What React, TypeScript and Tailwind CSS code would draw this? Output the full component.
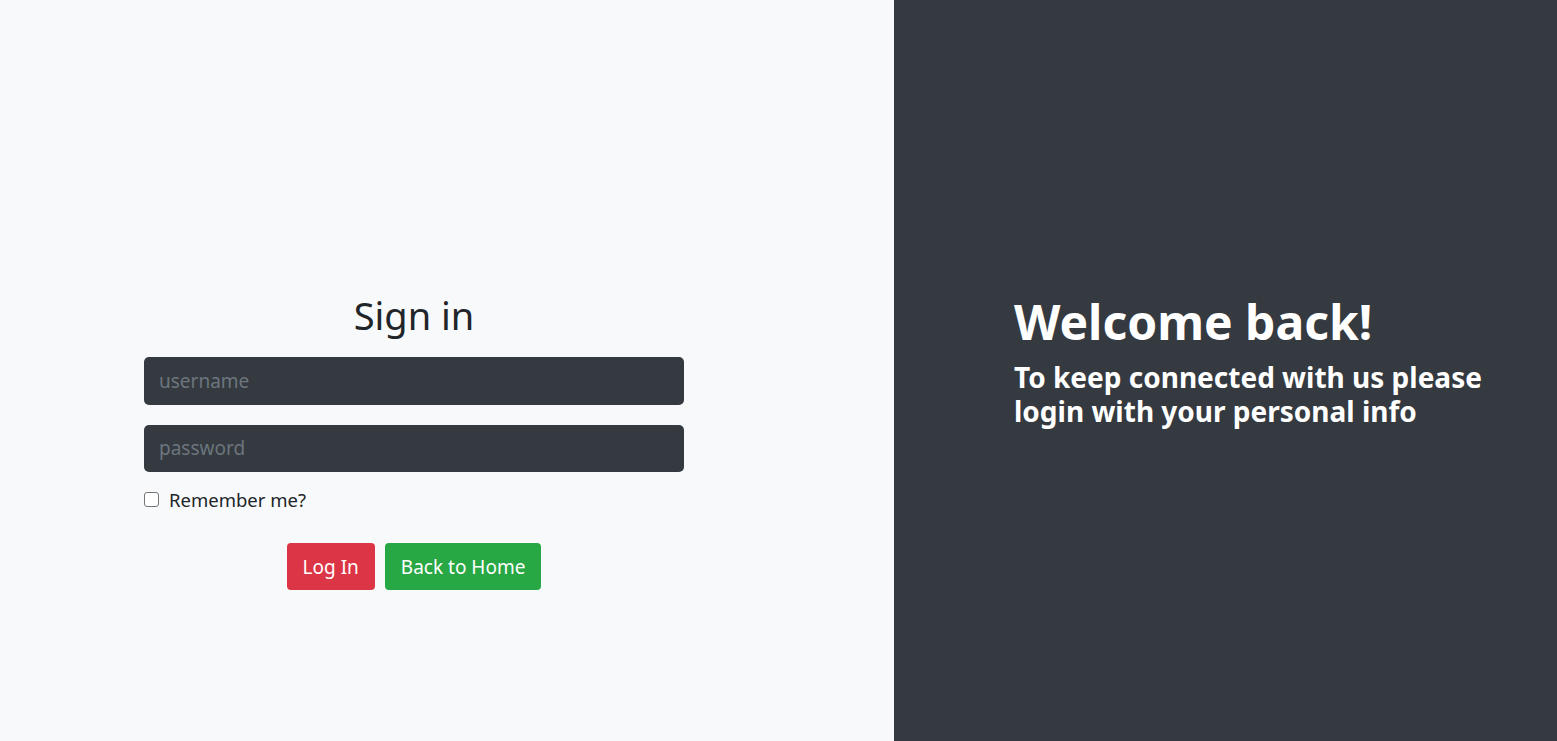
import React from "react";

export default function App() {
  return (
    <div
      className="flex h-[741px] w-full overflow-hidden"
      style={{ fontFamily: '"Noto Sans", "Open Sans", sans-serif' }}
    >
      <div className="w-[894px] shrink-0 bg-[#f8f9fa]">
        <div className="ml-[144px] mt-[293px] w-[540px]">
          <h1 className="text-center text-[38px] leading-[1.2] font-normal text-[#212529] mb-[18px]">
            Sign in
          </h1>
          <input
            type="text"
            placeholder="username"
            className="block w-full h-[48px] rounded-[5px] bg-[#343a40] px-[15px] text-[19px] text-white placeholder:text-[#6c757d] outline-none"
          />
          <input
            type="password"
            placeholder="password"
            className="mt-[20px] block w-full h-[47px] rounded-[5px] bg-[#343a40] px-[15px] text-[19px] text-white placeholder:text-[#6c757d] outline-none"
          />
          <label className="mt-[14px] flex items-center gap-[10px] text-[18.5px] text-[#212529]">
            <span className="inline-block h-[15px] w-[15px] rounded-[3px] border-[1.5px] border-[#767676] bg-white" />
            Remember me?
          </label>
          <div className="mt-[30px] flex justify-center gap-[10px]">
            <button className="h-[47px] rounded-[4px] bg-[#dc3545] px-[16px] text-[19px] text-white">
              Log In
            </button>
            <button className="h-[47px] rounded-[4px] bg-[#28a745] px-[16px] text-[19px] text-white">
              Back to Home
            </button>
          </div>
        </div>
      </div>
      <div className="flex flex-1 items-center bg-[#343a40] pl-[120px] pb-[20px]">
        <div className="w-[500px] text-white">
          <h1 className="text-[48px] font-bold leading-[58px] mb-[9px]">Welcome back!</h1>
          <h3 className="text-[28px] font-bold leading-[34px]">
            To keep connected with us please login with your personal info
          </h3>
        </div>
      </div>
    </div>
  );
}
